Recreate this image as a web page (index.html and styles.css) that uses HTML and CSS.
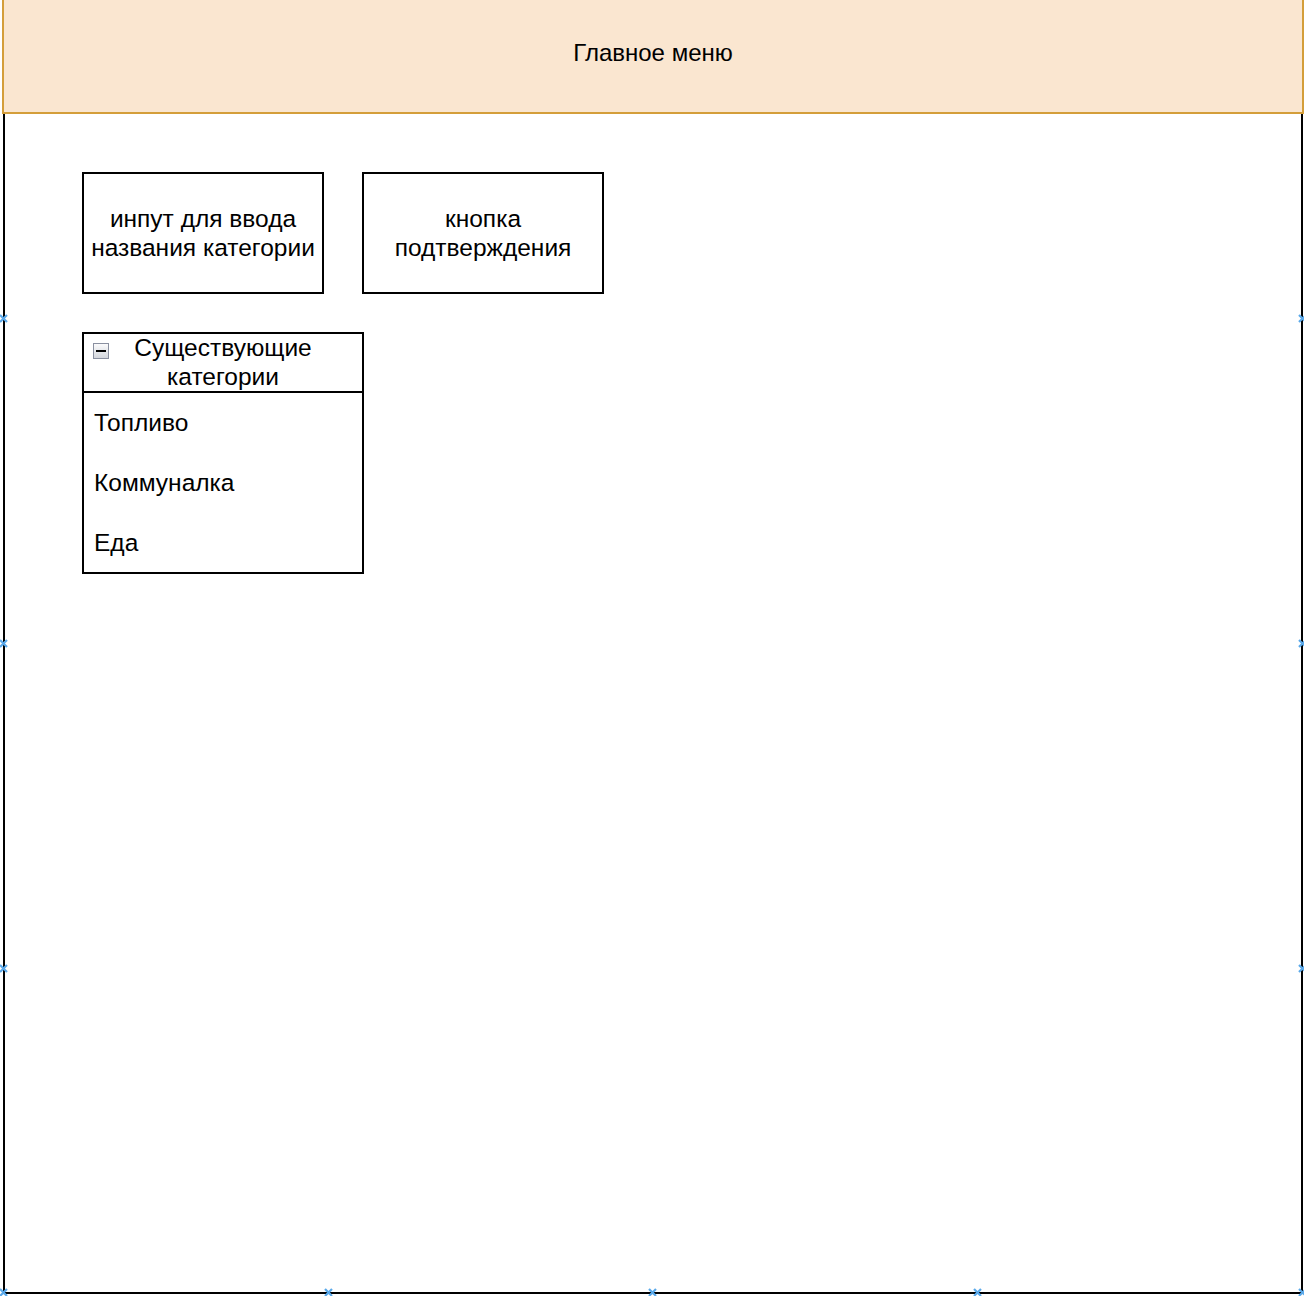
FILE: index.html
```html
<!DOCTYPE html>
<html lang="ru">
<head>
<meta charset="utf-8">
<title>Категории</title>
<link rel="stylesheet" href="styles.css">
</head>
<body>
<div class="board">
  <header class="topbar">Главное меню</header>
  <main class="frame">
    <div class="row">
      <div class="box">инпут для ввода<br>названия категории</div>
      <div class="box">кнопка<br>подтверждения</div>
    </div>
    <section class="list">
      <div class="list-head">
        <span class="toggle"><span class="minus"></span></span>
        <span class="list-title">Существующие<br>категории</span>
      </div>
      <div class="item">Топливо</div>
      <div class="item">Коммуналка</div>
      <div class="item">Еда</div>
    </section>
  </main>
  <svg class="marks" width="1304" height="1296" viewBox="0 0 1304 1296" aria-hidden="true">
    <g stroke="#5aa9ea" stroke-width="2.2" fill="none">
      <path d="M0 315l7 7M7 315l-7 7"/>
      <path d="M0 640l7 7M7 640l-7 7"/>
      <path d="M0 965l7 7M7 965l-7 7"/>
      <path d="M1299 315l7 7M1306 315l-7 7"/>
      <path d="M1299 640l7 7M1306 640l-7 7"/>
      <path d="M1299 965l7 7M1306 965l-7 7"/>
      <path d="M0 1289l7 7M7 1289l-7 7"/>
      <path d="M325 1289l7 7M332 1289l-7 7"/>
      <path d="M649 1289l7 7M656 1289l-7 7"/>
      <path d="M974 1289l7 7M981 1289l-7 7"/>
      <path d="M1299 1289l7 7M1306 1289l-7 7"/>
    </g>
  </svg>
</div>
</body>
</html>
```

FILE: styles.css
```css
html, body {
  margin: 0;
  padding: 0;
  background: #ffffff;
}

body {
  font-family: "Liberation Sans", Arial, Helvetica, sans-serif;
  color: #000000;
  font-size: 24px;
  line-height: 1.2;
}

.board {
  position: relative;
  width: 1304px;
  height: 1296px;
  overflow: hidden;
  padding-left: 2px;
  box-sizing: border-box;
}

.topbar {
  box-sizing: border-box;
  width: 1302px;
  height: 114px;
  background: #fae6d0;
  border: 2px solid #d49e3a;
  border-top: none;
  display: flex;
  align-items: center;
  justify-content: center;
  padding-bottom: 6px;
  font-size: 24px;
}

.frame {
  box-sizing: border-box;
  margin-left: 1px;
  width: 1300px;
  height: 1180px;
  border: 2px solid #000000;
  border-top: none;
  padding: 58px 0 0 77px;
  display: flex;
  flex-direction: column;
  gap: 38px;
}

.row {
  display: flex;
  gap: 38px;
}

.box {
  box-sizing: border-box;
  width: 242px;
  height: 122px;
  border: 2px solid #000000;
  display: flex;
  align-items: center;
  justify-content: center;
  text-align: center;
  font-size: 24.5px;
  line-height: 29px;
  white-space: nowrap;
}

.list {
  box-sizing: border-box;
  width: 282px;
  height: 242px;
  overflow: hidden;
  border: 2px solid #000000;
}

.list-head {
  position: relative;
  box-sizing: border-box;
  height: 59px;
  border-bottom: 2px solid #000000;
  display: flex;
  align-items: center;
  justify-content: center;
  text-align: center;
  font-size: 24.5px;
  line-height: 29px;
  padding-bottom: 1px;
}

.toggle {
  position: absolute;
  left: 9px;
  top: 9px;
  width: 16px;
  height: 16px;
  box-sizing: border-box;
  border: 1px solid #8a90a0;
  background: linear-gradient(#fbfbfc, #d3d6dc);
  display: flex;
  align-items: center;
  justify-content: center;
}

.minus {
  width: 10px;
  height: 2px;
  background: #000000;
}

.list-title {
  display: block;
  padding-left: 0;
}

.item {
  height: 60px;
  display: flex;
  align-items: center;
  padding-left: 10px;
  font-size: 24.5px;
}

.marks {
  position: absolute;
  left: 0;
  top: 0;
  pointer-events: none;
}
```
